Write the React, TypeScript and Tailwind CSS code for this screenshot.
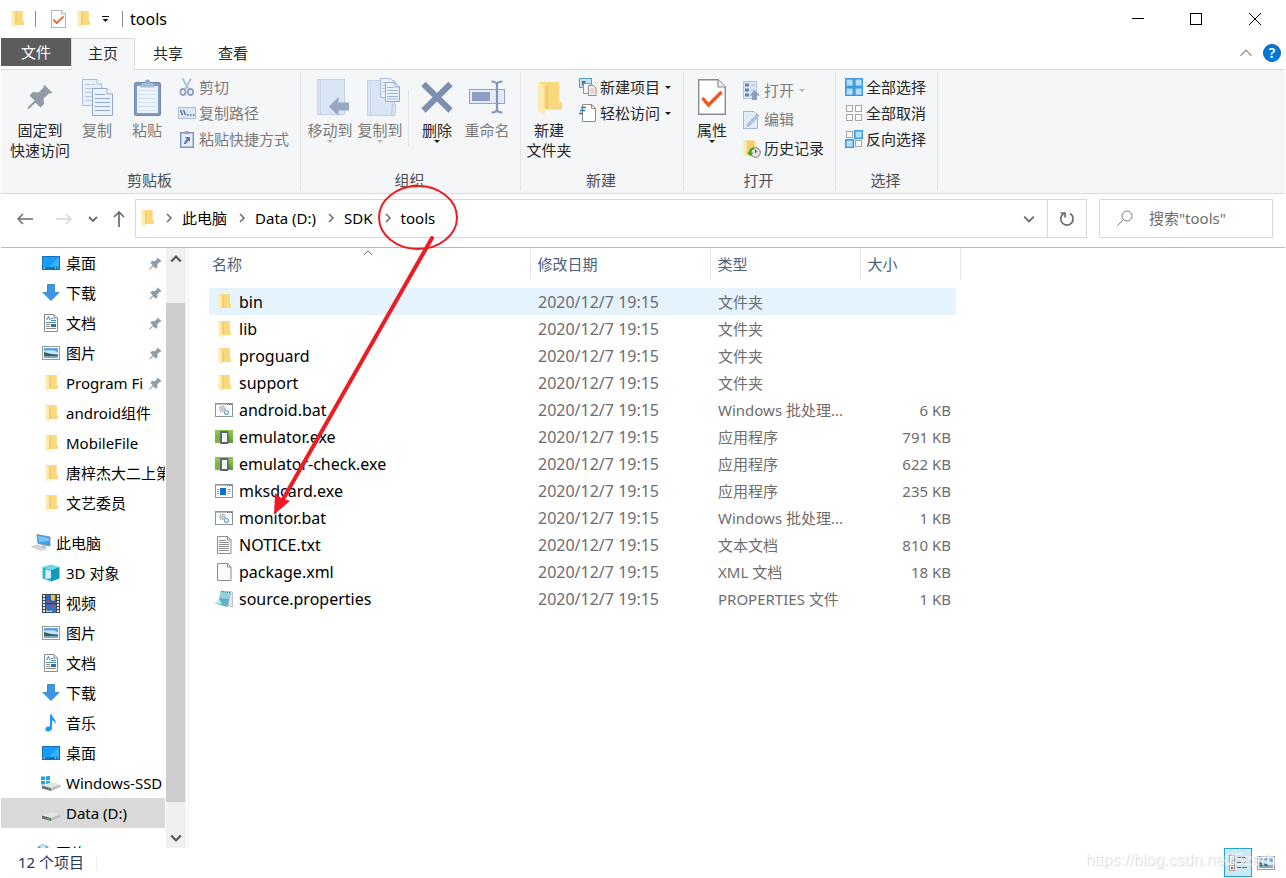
import React from 'react';

type IconProps = { className?: string };

/* ---------- Icons ---------- */

const FolderIcon: React.FC<IconProps> = ({ className = 'w-[13px] h-[18px]' }) => (
  <svg viewBox="0 0 13 18" preserveAspectRatio="none" className={className}>
    <path d="M3 1h8.5v10.5H13V15H3z" fill="#f5cd6c" />
    <path d="M6 1h5.5v10.5H13V15H6z" fill="#fad87d" />
    <path d="M0.5 1L4 3.5V18L0.5 15.5z" fill="#fdebb0" />
    <path d="M0.5 1H8L4 3.5z" fill="#fbdc85" />
  </svg>
);

const CheckPageIcon: React.FC<IconProps> = ({ className = 'w-[15px] h-[18px]' }) => (
  <svg viewBox="0 0 28 36" preserveAspectRatio="none" className={className}>
    <path d="M0.7 0.7H20l7.3 7.3V35.3H0.7z" fill="#fff" stroke="#8c8c8c" strokeWidth="1.4" />
    <path d="M20 0.7V8h7.3" fill="#eee" stroke="#8c8c8c" strokeWidth="1.2" />
    <path d="M4.5 19l6 7L23.5 13" fill="none" stroke="#f0561d" strokeWidth="3.4" />
  </svg>
);

const PinIcon: React.FC<IconProps> = ({ className = 'w-[13px] h-[13px]' }) => (
  <svg viewBox="0 0 26 26" className={className}>
    <path
      d="M17 0.5L25.5 9l-3.5 0.5-5.5 5 0.5 5.5-3.5 3.5-5-5L2 25l-1.5-0.5L1 23l6.5-6.5-5-5L6 8l5.5 0.5 5-5z"
      fill="#8f9ba5"
    />
  </svg>
);

const CopyIcon = () => (
  <svg viewBox="0 0 31 37" className="w-[31px] h-[37px]">
    <path d="M0.5 0.5H15l4.5 4.5V26.5H0.5z" fill="#e6effa" stroke="#a9bdd9" />
    <path d="M15 0.5V5h4.5" fill="#fff" stroke="#a9bdd9" />
    <path d="M3 5.5h10M3 9.5h13M3 13.5h9M3 17.5h7M3 21.5h7" stroke="#b7c9e2" />
    <path d="M10.5 9.5H25l5.5 5.5V36.5H10.5z" fill="#eaf2fc" stroke="#91a8cb" />
    <path d="M25 9.5V15h5.5" fill="#fff" stroke="#91a8cb" />
    <path d="M13 15.5h10M13 19.5h15M13 23.5h15M13 27.5h15M13 31.5h15" stroke="#91a8cb" />
  </svg>
);

const PasteIcon = () => (
  <svg viewBox="0 0 27 37" className="w-[27px] h-[37px]">
    <rect x="0.5" y="3.5" width="26" height="33" rx="1.5" fill="#8299c1" stroke="#7189b5" />
    <rect x="3" y="7" width="21" height="27" fill="#edf4fd" />
    <path d="M4 11.5h19M4 15.5h19M4 19.5h19M4 23.5h19M4 27.5h19M4 31.5h19" stroke="#d3dff0" />
    <circle cx="13.5" cy="3" r="2.5" fill="#8fa5ca" />
    <path d="M8 4h11l2 4.5H6z" fill="#a8bbd8" />
  </svg>
);

const CutIcon = () => (
  <svg viewBox="0 0 16 18" className="w-4 h-[18px]" fill="none" stroke="#8ea1be" strokeWidth="1.8">
    <path d="M3.5 0.5L10 11.5M12 0.5L6 11.5" stroke="#b3c2d8" strokeWidth="2" />
    <ellipse cx="4" cy="14" rx="2.6" ry="3" />
    <ellipse cx="11.5" cy="14" rx="2.6" ry="3" />
  </svg>
);

const CopyPathIcon = () => (
  <svg viewBox="0 0 18 12" className="w-[18px] h-3">
    <rect x="0.5" y="0.5" width="17" height="11" fill="#dbe7f6" stroke="#aebfd9" />
    <path d="M2.5 3l2 5M5.5 3l2 5" stroke="#50698f" strokeWidth="1.3" />
    <path d="M9 8h1.5M12 8h1.5M15 8h1.5" stroke="#50698f" strokeWidth="1.5" />
  </svg>
);

const PasteLinkIcon = () => (
  <svg viewBox="0 0 14 18" className="w-3.5 h-[18px]">
    <rect x="0.75" y="2.75" width="12.5" height="14.5" fill="#e6effa" stroke="#7e97c1" strokeWidth="1.5" />
    <path d="M4 4l1.5-3h3L10 4z" fill="#8fa5ca" />
    <path d="M5 7h5v5L8.5 10.5 6 14H4c0-2 1.5-4 2.5-5z" fill="#5f7cad" />
  </svg>
);

const MoveToIcon = () => (
  <svg viewBox="-5 0 37 37" className="w-[37px] h-[37px]">
    <rect x="0.5" y="0.5" width="27" height="35" fill="#d9e5f5" stroke="#c2d2e8" />
    <path d="M3.5 1v34" stroke="#c8d7ec" />
    <path d="M12 27.5L21.5 18v5.5H32v8H21.5V37z" fill="#97a8c5" />
  </svg>
);

const CopyToIcon = () => (
  <svg viewBox="-7 0 41 39" className="w-[41px] h-[39px]">
    <rect x="0.5" y="2.5" width="27" height="35" fill="#d9e5f5" stroke="#c2d2e8" />
    <path d="M3.5 3v34" stroke="#c8d7ec" />
    <path d="M25.5 26h3v9l-2 2.5h-2z" fill="#d9e5f5" stroke="#b9cae3" />
    <path d="M13.5 0.5h10l4 4v15h-14z" fill="#eaf2fc" stroke="#a9bdd9" />
    <path d="M15 4.5h7M15 7.5h7M15 10.5h7M15 13.5h7" stroke="#b7c9e2" />
    <path d="M18.5 4.5H28l4.5 4.5v14.5h-14z" fill="#eaf2fc" stroke="#91a8cb" />
    <path d="M28 4.5V9h4.5" fill="none" stroke="#91a8cb" />
    <path d="M20 9.5h7M20 12.5h11M20 15.5h11M20 18.5h11M20 21h11" stroke="#9db3d3" />
  </svg>
);

const DeleteIcon = () => (
  <svg viewBox="0 0 32 32" className="w-8 h-8">
    <path d="M2.5 3L29.5 29.5M29.5 3L2.5 29.5" stroke="#7d8fb1" strokeWidth="6" />
  </svg>
);

const RenameIcon = () => (
  <svg viewBox="0 0 36 34" className="w-9 h-[34px]">
    <rect x="0.5" y="9.5" width="35" height="14" fill="#e2ecf9" stroke="#8ea5c9" />
    <rect x="3" y="12" width="18" height="9" fill="#8c9fc1" />
    <path
      d="M22.5 1.5c3 0 5.5 1 5.5 3.5 0-2.5 2.5-3.5 5.5-3.5M28 4v26M22.5 32.5c3 0 5.5-1 5.5-3.5 0 2.5 2.5 3.5 5.5 3.5"
      fill="none"
      stroke="#8597b8"
      strokeWidth="2.2"
    />
  </svg>
);

const NewItemIcon = () => (
  <svg viewBox="0 0 18 18" className="w-[18px] h-[18px]">
    <rect x="0.5" y="0.5" width="12" height="9" fill="#bfe3f7" stroke="#5b9fc6" />
    <rect x="3" y="3" width="3.5" height="4.5" fill="#54717f" />
    <rect x="4.5" y="5.5" width="8" height="10" fill="#f5f5f5" stroke="#999" />
    <path d="M9.5 7.5h5l2.5 2.5v7.5H9.5z" fill="#fff" stroke="#888" />
    <path d="M11 11h4.5M11 13h4.5M11 15h4.5" stroke="#e3a19b" />
  </svg>
);

const EasyAccessIcon = () => (
  <svg viewBox="0 0 18 18" className="w-[18px] h-[18px]">
    <path d="M3.5 0.5h9l4 4v13H3.5z" fill="#fff" stroke="#8c8c8c" />
    <path d="M12.5 0.5v4h4" fill="none" stroke="#8c8c8c" />
    <path d="M2 3.5h5M1 6.5h5M0 9.5h4" stroke="#2f74b5" strokeWidth="1.3" />
  </svg>
);

const OpenIcon = () => (
  <svg viewBox="0 0 18 19" className="w-[18px] h-[19px]">
    <rect x="0.5" y="0.5" width="13" height="17" fill="#dbe7f6" stroke="#b3c4de" />
    <path d="M2 2.5h4v3H2zM2 7.5h4v3H2zM2 12.5h4v3H2z" fill="#6d82a8" />
    <path d="M8 4h4M8 9h3M8 14h2" stroke="#a9b9d3" />
    <path d="M11.5 9L17 14.5h-3V19H9v-4.5H6.5z" fill="#8c9fc1" />
  </svg>
);

const EditIcon = () => (
  <svg viewBox="0 0 18 18" className="w-[18px] h-[18px]">
    <path d="M0.5 0.5H11l3.5 3.5v13.5H0.5z" fill="#e2ecf9" stroke="#a5b9d8" />
    <path d="M5 13L14 3l2 2-9.5 9.5L4 15.5z" fill="#b9cbe4" stroke="#8ba2c8" strokeWidth="0.8" />
  </svg>
);

const HistoryIcon = () => (
  <svg viewBox="0 0 18 18" className="w-[18px] h-[18px]">
    <path d="M2 0.5h10V15H2z" fill="#f7ce6b" />
    <path d="M0.5 0.5L4 2v15.5L0.5 15z" fill="#fdeaa9" />
    <circle cx="12.5" cy="12.5" r="4.8" fill="#e6e6e6" stroke="#777" />
    <path d="M12.5 9.5v3l2-1.5" fill="none" stroke="#555" />
    <path d="M11 7.5c-4 0-5 2.5-5 5H4l3.5 4 3-4H8.5c0-2 1-3 2.5-3z" fill="#36a837" />
  </svg>
);

const SelectGridIcon: React.FC<{ cells: boolean[] }> = ({ cells }) => (
  <svg viewBox="0 0 18 18" className="w-[18px] h-[18px]">
    {cells.map((on, i) => {
      const x = (i % 2) * 9;
      const y = Math.floor(i / 2) * 9;
      return (
        <rect
          key={i}
          x={x + (on ? 0.8 : 1.5)}
          y={y + (on ? 0.8 : 1.5)}
          width={on ? 7.6 : 6}
          height={on ? 7.6 : 6}
          fill={on ? '#b5defa' : '#fff'}
          stroke={on ? '#3897e0' : '#a5a5a5'}
          strokeWidth={on ? 1.5 : 1}
        />
      );
    })}
  </svg>
);

const DesktopIcon = () => (
  <svg viewBox="0 0 18 14" className="w-[18px] h-3.5">
    <rect x="0.5" y="0.5" width="17" height="13" fill="#189cf7" stroke="#0f6fb8" />
    <path d="M17 1v9L7 11z" fill="#3fb0fb" />
    <path d="M1 12h16" stroke="#0b4d83" />
    <path d="M1.5 12h1.5M13 12h1M15.5 12h1" stroke="#fff" />
  </svg>
);

const DownloadIcon = () => (
  <svg viewBox="0 0 18 18" className="w-[18px] h-[18px]">
    <path d="M5.5 0.5h7v8h4.5L9 16.5 1 8.5h4.5z" fill="#3c96e4" stroke="#2a78c0" strokeWidth="0.8" />
  </svg>
);

const DocumentIcon = () => (
  <svg viewBox="0 0 18 18" className="w-[18px] h-[18px]">
    <path d="M2.5 0.5h9.5l3.5 3.5v13.5h-13z" fill="#fff" stroke="#848b91" />
    <path d="M12 0.5V4h3.5" fill="#ddd" stroke="#848b91" />
    <path d="M4.5 6L6.5 2.5 8 6" fill="none" stroke="#2c7cc0" />
    <path d="M9 4.5h2M9 6.5h5M4 8.5h10" stroke="#4695cf" />
    <path d="M4 10.5h4M4 12.5h4M4 14.5h10" stroke="#8b8b8b" />
    <rect x="9" y="10" width="5" height="3" fill="#3f6d93" />
  </svg>
);

const PictureIcon = () => (
  <svg viewBox="0 0 18 14" className="w-[18px] h-3.5">
    <rect x="0.5" y="0.5" width="17" height="13" fill="#fff" stroke="#9a9a9a" />
    <rect x="2" y="2" width="14" height="10" fill="#5ea3e8" />
    <path d="M4 4.5h8l4 2v1.5H2V5z" fill="#cfe6fa" />
    <path d="M2 6l5 1.5 9 1.5V10H2z" fill="#39605a" />
    <path d="M2 10h14v2H2z" fill="#7da9c8" />
  </svg>
);

const ComputerIcon = () => (
  <svg viewBox="0 0 20 18" className="w-5 h-[18px]">
    <path d="M6 0.5L19 3v9L7 9.5z" fill="#3aa1ee" stroke="#7c8790" strokeWidth="0.8" />
    <path d="M7 2l11 2v3L8 8z" fill="#7cc4f7" />
    <path d="M11 11l4 1v2h-5z" fill="#b7bcc0" />
    <path d="M0.5 12.5L6 11l9 3.5-5 2z" fill="#d4d7da" stroke="#b5b9bc" strokeWidth="0.6" />
  </svg>
);

const CubeIcon = () => (
  <svg viewBox="0 0 18 18" className="w-[18px] h-[18px]">
    <path d="M0.5 3L9 0.5 17.5 3 9 6z" fill="#6fd3e6" />
    <path d="M0.5 3L9 6v11.5l-8.5-3z" fill="#35b3cf" />
    <path d="M17.5 3L9 6v11.5l8.5-3z" fill="#129bb9" />
    <path d="M3.5 5.5L9 7v7l-5.5 1z" fill="#d5f2f8" />
  </svg>
);

const VideoIcon = () => (
  <svg viewBox="0 0 18 19" className="w-[18px] h-[19px]">
    <rect width="18" height="19" fill="#454545" />
    <path d="M2 1v17M16 1v17" stroke="#e8e8e8" strokeWidth="2" strokeDasharray="2 1" />
    <rect x="4" y="1" width="10" height="8" fill="#2a66c4" />
    <rect x="4" y="10.5" width="10" height="8" fill="#2f72d1" />
    <path d="M9 1h4v3l-1 3-3-1z" fill="#e8c630" />
    <circle cx="6.5" cy="7" r="1.5" fill="#d8443a" />
    <path d="M9.5 10.5h3l-1 3h-1z" fill="#d8443a" />
    <path d="M4 16l3 1 3-1v2H4z" fill="#e8c630" />
  </svg>
);

const MusicIcon = () => (
  <svg viewBox="0 0 18 18" className="w-[18px] h-[18px]">
    <path d="M8 0.5h2c0 3.5 4.5 4.5 4 10-0.5-2-1.5-3.5-4-4v7.5c0 2-1.5 3.5-4 3.5-3.5 0-3.5-5 0.5-5H8z" fill="#149bf3" />
  </svg>
);

const DiskIcon: React.FC<{ windows?: boolean }> = ({ windows }) => (
  <svg viewBox="0 0 20 16" className="w-5 h-4">
    {windows && <path d="M0 1.5h4V5H0zM5 1.3L9 1v4H5zM0 6h4v3.5H0zM5 6h4v4l-4-0.5z" fill="#19a7e8" />}
    <path d="M1 10.5L11 7l8.5 2.500L10 13z" fill="#e6e6e6" />
    <path d="M1 10.5l9 2.5v3l-9-2.500z" fill="#6b6f6d" />
    <path d="M19.5 9.5V12L10 16v-3z" fill="#bdbdbd" />
    <circle cx="7.5" cy="13.8" r="0.8" fill="#37d05a" />
  </svg>
);

const NetworkIcon = () => (
  <svg viewBox="0 0 20 18" className="w-5 h-[18px]">
    <circle cx="12" cy="7" r="6.5" fill="#5aa0c4" />
    <path d="M9 1.5l5-0.5 1 3-5 2z" fill="#cfe7ee" />
  </svg>
);

const BatIcon = () => (
  <svg viewBox="0 0 18 14" className="w-[18px] h-3.5">
    <rect x="0.5" y="0.5" width="17" height="13" fill="#fff" stroke="#8b9299" />
    <path d="M1 1.5h16" stroke="#b8bdc2" />
    <path d="M12 1.5h1M14 1.5h1M16 1.5h1" stroke="#5d656c" />
    <circle cx="7.5" cy="6" r="2.6" fill="none" stroke="#8b959e" strokeWidth="1.5" strokeDasharray="1.2 0.6" />
    <circle cx="7.5" cy="6" r="1.2" fill="#a8b0b7" />
    <circle cx="11.5" cy="9.5" r="2" fill="#e4f2fb" stroke="#7fa6c3" strokeWidth="1.2" />
  </svg>
);

const EmulatorIcon = () => (
  <svg viewBox="0 0 18 16" className="w-[18px] h-4">
    <rect y="1" width="18" height="13" fill="#7cb342" />
    <path d="M0 1h18v5H0z" fill="#8bc34a" />
    <path d="M12 6l6 6v2h-6z" fill="#629a35" />
    <rect x="5" y="2" width="8.5" height="13" rx="1" fill="#5d666b" />
    <rect x="7" y="4" width="5" height="9" fill="#f1f3f4" />
  </svg>
);

const ExeIcon = () => (
  <svg viewBox="0 0 18 14" className="w-[18px] h-3.5">
    <rect x="0.5" y="0.5" width="17" height="13" fill="#fff" stroke="#8b9299" />
    <path d="M1 1.5h16" stroke="#b8bdc2" />
    <path d="M12 1.5h1M14 1.5h1M16 1.5h1" stroke="#5d656c" />
    <rect x="5" y="4" width="6" height="7" fill="#0a6fd8" />
    <path d="M2 5.5h2M2 7.5h2M2 9.5h2M12.5 5.5h3.5M12.5 7.5h3.5M12.5 9.5h2" stroke="#8ba6bd" />
  </svg>
);

const PageIcon: React.FC<{ lines?: boolean }> = ({ lines }) => (
  <svg viewBox="0 0 18 18" className="w-[18px] h-[18px]">
    <path d="M2.5 0.5h10l3.5 3.5v13.5H2.5z" fill="#fbfbfb" stroke="#8c8c8c" />
    <path d="M12.5 0.5V4H16" fill="none" stroke="#8c8c8c" />
    {lines && <path d="M4 4.5h7M4 6.5h10M4 8.5h10M4 10.5h10M4 12.5h10M4 14.5h10" stroke="#8f8f8f" />}
  </svg>
);

const PropertiesIcon = () => (
  <svg viewBox="0 0 20 18" className="w-5 h-[18px] shrink-0">
    <path d="M15 1.5l3.5 0.5V17L14 15.5z" fill="#e9e6dc" stroke="#a0a0a0" strokeWidth="0.6" />
    <path d="M7 1l10 1-3.5 15L1 13.5 5 9z" fill="#5fb2c6" />
    <path d="M7 1l10 1-1.5 7L5 8z" fill="#93d2df" />
    <path d="M1 13.5L5 9l3 5z" fill="#c9ecf2" />
    <path d="M7 1.5l10 1" stroke="#5a6a70" strokeDasharray="1 1" />
  </svg>
);

const Chevron: React.FC<IconProps & { d: string; color?: string; width?: number }> = ({
  className = 'w-2.5 h-2.5',
  d,
  color = '#6b6b6b',
  width = 1.5,
}) => (
  <svg viewBox="0 0 10 10" className={className}>
    <path d={d} fill="none" stroke={color} strokeWidth={width} />
  </svg>
);

const CHEVRON_UP = 'M1 7l4-4 4 4';
const CHEVRON_DOWN = 'M1 3l4 4 4-4';
const CHEVRON_RIGHT = 'M3 1l4 4-4 4';

const Caret: React.FC<{ disabled?: boolean }> = ({ disabled }) => (
  <svg viewBox="0 0 6 3" className="w-1.5 h-[3px] shrink-0">
    <path d="M0 0h6L3 3z" fill={disabled ? '#b3b3b3' : '#1a1a1a'} />
  </svg>
);

/* ---------- Ribbon ---------- */

type BigButtonProps = {
  icon: React.ReactNode;
  lines: string[];
  disabled?: boolean;
  caret?: boolean;
  wide?: boolean;
};

const BigButton: React.FC<BigButtonProps> = ({ icon, lines, disabled, caret, wide }) => (
  <button
    type="button"
    disabled={disabled}
    className={`flex flex-col items-center shrink-0 leading-5 whitespace-nowrap ${wide ? 'w-16' : 'w-[50px]'} ${
      disabled ? 'text-[#7b7b7b]' : 'text-[#262626]'
    }`}
  >
    <span className="flex h-[46px] items-center justify-center">{icon}</span>
    {lines.map((line) => (
      <span key={line}>{line}</span>
    ))}
    {caret && <Caret disabled={disabled} />}
  </button>
);

type SmallButtonProps = {
  icon: React.ReactNode;
  label: string;
  disabled?: boolean;
  caret?: boolean;
  tall?: boolean;
};

const SmallButton: React.FC<SmallButtonProps> = ({ icon, label, disabled, caret, tall }) => (
  <button
    type="button"
    disabled={disabled}
    className={`flex items-center whitespace-nowrap ${tall ? 'h-[29px]' : 'h-[26px]'} ${
      disabled ? 'text-[#7b7b7b]' : 'text-[#262626]'
    }`}
  >
    <span className="mr-[3px] flex w-[18px] justify-center">{icon}</span>
    <span className="pb-px">{label}</span>
    {caret && (
      <span className="ml-[5px]">
        <Caret disabled={disabled} />
      </span>
    )}
  </button>
);

const RibbonGroup: React.FC<{ label: string; className: string; bodyClass: string; children: React.ReactNode }> = ({
  label,
  className,
  bodyClass,
  children,
}) => (
  <section
    aria-label={label}
    className={`flex flex-col shrink-0 border-r border-[#e2e3e4] my-0.5 pt-0.5 pb-px ${className}`}
  >
    <div className={`flex flex-1 ${bodyClass}`}>{children}</div>
    <div className="pr-0.5 text-center leading-5 text-[#4d4d4d]">{label}</div>
  </section>
);

const Ribbon = () => (
  <div className="flex h-[124px] shrink-0 overflow-hidden bg-[#f5f6f7] border-b border-[#dadbdc]">
    <RibbonGroup label="剪贴板" className="w-[300px]" bodyClass="pl-[7px]">
      <BigButton wide icon={<PinIcon className="w-[26px] h-[26px]" />} lines={['固定到', '快速访问']} />
      <BigButton disabled icon={<CopyIcon />} lines={['复制']} />
      <BigButton disabled icon={<PasteIcon />} lines={['粘贴']} />
      <div className="ml-1.5 flex flex-col">
        <SmallButton disabled icon={<CutIcon />} label="剪切" />
        <SmallButton disabled icon={<CopyPathIcon />} label="复制路径" />
        <SmallButton disabled icon={<PasteLinkIcon />} label="粘贴快捷方式" />
      </div>
    </RibbonGroup>
    <RibbonGroup label="组织" className="w-[220px]" bodyClass="pl-1">
      <BigButton disabled caret icon={<MoveToIcon />} lines={['移动到']} />
      <BigButton disabled caret icon={<CopyToIcon />} lines={['复制到']} />
      <div className="mx-[3px] mt-4 h-14 w-px bg-[#e2e3e4]" />
      <BigButton caret icon={<DeleteIcon />} lines={['删除']} />
      <BigButton disabled icon={<RenameIcon />} lines={['重命名']} />
    </RibbonGroup>
    <RibbonGroup label="新建" className="w-[163px]" bodyClass="pl-[3px]">
      <BigButton icon={<FolderIcon className="w-[25px] h-[35px]" />} lines={['新建', '文件夹']} />
      <div className="ml-[5px] flex flex-col">
        <SmallButton caret icon={<NewItemIcon />} label="新建项目" />
        <SmallButton caret icon={<EasyAccessIcon />} label="轻松访问" />
      </div>
    </RibbonGroup>
    <RibbonGroup label="打开" className="w-[152px]" bodyClass="pl-[3px]">
      <BigButton caret icon={<CheckPageIcon className="w-7 h-9" />} lines={['属性']} />
      <div className="ml-1.5 flex flex-col pt-0.5">
        <SmallButton tall disabled caret icon={<OpenIcon />} label="打开" />
        <SmallButton tall disabled icon={<EditIcon />} label="编辑" />
        <SmallButton tall icon={<HistoryIcon />} label="历史记录" />
      </div>
    </RibbonGroup>
    <RibbonGroup label="选择" className="w-[102px]" bodyClass="pl-[9px]">
      <div className="flex flex-col">
        <SmallButton icon={<SelectGridIcon cells={[true, true, true, true]} />} label="全部选择" />
        <SmallButton icon={<SelectGridIcon cells={[false, false, false, false]} />} label="全部取消" />
        <SmallButton icon={<SelectGridIcon cells={[false, true, true, false]} />} label="反向选择" />
      </div>
    </RibbonGroup>
  </div>
);

/* ---------- Title bar and tabs ---------- */

const TitleBar = () => (
  <header className="flex h-[38px] shrink-0 items-center">
    <div className="flex items-center pl-2.5">
      <FolderIcon />
      <div className="ml-[11px] h-4 w-px bg-[#8a8a8a]" />
      <button type="button" aria-label="属性" className="ml-[15px]">
        <CheckPageIcon />
      </button>
      <button type="button" aria-label="新建文件夹" className="ml-[11px]">
        <FolderIcon />
      </button>
      <button type="button" aria-label="自定义快速访问工具栏" className="ml-3">
        <svg viewBox="0 0 7 6" className="w-[7px] h-1.5">
          <path d="M0 0.5h7" stroke="#111" />
          <path d="M0.5 3h6L3.5 6z" fill="#111" />
        </svg>
      </button>
      <div className="ml-[13px] h-4 w-px bg-[#8a8a8a]" />
      <h1 className="ml-[7px] text-base leading-5 text-black">tools</h1>
    </div>
    <div className="ml-auto flex h-full">
      <button type="button" aria-label="最小化" className="flex w-[58px] items-center justify-center">
        <svg viewBox="0 0 12 12" className="w-3 h-3">
          <path d="M0 5.5h12" stroke="#000" />
        </svg>
      </button>
      <button type="button" aria-label="最大化" className="flex w-[58px] items-center justify-center">
        <svg viewBox="0 0 12 12" className="w-3 h-3">
          <rect x="0.5" y="0.5" width="11" height="11" fill="none" stroke="#000" />
        </svg>
      </button>
      <button type="button" aria-label="关闭" className="flex w-[60px] items-center justify-center">
        <svg viewBox="0 0 12 12" className="w-3 h-3">
          <path d="M0 0l12 12M12 0L0 12" stroke="#000" />
        </svg>
      </button>
    </div>
  </header>
);

const Tabs = () => (
  <nav className="flex h-8 shrink-0 border-b border-[#dadbdc] text-[#262626]">
    <button type="button" className="h-7 w-[70px] bg-[#5c5c5c] text-white">
      文件
    </button>
    <button type="button" className="h-8 w-16 border border-b-0 border-[#dadbdc] bg-[#f5f6f7] pb-[3px]">
      主页
    </button>
    <button type="button" className="h-[31px] w-[66px] pb-0.5">
      共享
    </button>
    <button type="button" className="h-[31px] w-16 pb-0.5">
      查看
    </button>
    <div className="ml-auto flex items-center gap-2.5 pr-1 pb-0.5">
      <button type="button" aria-label="最小化功能区">
        <Chevron className="w-3.5 h-3.5" d={CHEVRON_UP} color="#9a9a9a" width={1} />
      </button>
      <button
        type="button"
        aria-label="帮助"
        className="flex size-[18px] items-center justify-center rounded-full border border-[#0a5fb0] bg-[#0078d7] text-sm font-semibold text-white"
      >
        ?
      </button>
    </div>
  </nav>
);

/* ---------- Address bar ---------- */

const crumbs = ['此电脑', 'Data (D:)', 'SDK', 'tools'];

const AddressBar = () => (
  <div className="flex h-[54px] shrink-0 items-center border-b border-[#b9b9b9] pr-3 pb-1">
    <div className="flex w-[134px] shrink-0 items-center pl-4">
      <button type="button" aria-label="后退">
        <svg viewBox="0 0 16 12" className="w-4 h-3" fill="none" stroke="#6b6b6b" strokeWidth="1.5">
          <path d="M16 6H1M6 1L1 6l5 5" />
        </svg>
      </button>
      <button type="button" aria-label="前进" disabled className="ml-[23px]">
        <svg viewBox="0 0 16 12" className="w-4 h-3" fill="none" stroke="#d6d6d6" strokeWidth="1.5">
          <path d="M0 6h15M10 1l5 5-5 5" />
        </svg>
      </button>
      <button type="button" aria-label="最近浏览的位置" className="ml-4">
        <Chevron d={CHEVRON_DOWN} width={1.8} />
      </button>
      <button type="button" aria-label="上移" className="ml-[15px]">
        <svg viewBox="0 0 12 16" className="w-3 h-4" fill="none" stroke="#6b6b6b" strokeWidth="1.7">
          <path d="M6 16V1M1 6l5-5 5 5" />
        </svg>
      </button>
    </div>
    <div className="flex h-[39px] flex-1 items-center border border-[#d9d9d9]">
      <div className="flex flex-1 items-center pl-[5px] pb-0.5">
        <FolderIcon />
        <ol className="flex items-center text-black">
          {crumbs.map((crumb) => (
            <li key={crumb} className="flex items-center">
              <Chevron className="ml-2.5 mr-2 w-2.5 h-2.5" d={CHEVRON_RIGHT} />
              <a href="#">{crumb}</a>
            </li>
          ))}
        </ol>
      </div>
      <button type="button" aria-label="以前的位置" className="flex h-full w-9 items-center justify-center">
        <Chevron className="w-3 h-3" d={CHEVRON_DOWN} />
      </button>
      <button
        type="button"
        aria-label="刷新"
        className="flex h-full w-[39px] items-center justify-center border-l border-[#d9d9d9]"
      >
        <svg viewBox="0 0 16 16" className="w-4 h-4" fill="none" stroke="#6b6b6b" strokeWidth="1.7">
          <path d="M11 2.5a6.2 6.2 0 1 1-6.5 0.2" />
          <path d="M1.5 2h4.5v4.5" />
        </svg>
      </button>
    </div>
    <label className="ml-3 flex h-[39px] w-[174px] items-center border border-[#d9d9d9] pl-[17px] pb-0.5">
      <svg viewBox="0 0 16 16" className="w-4 h-4 shrink-0" fill="none" stroke="#7a7a7a">
        <circle cx="10" cy="6" r="5" />
        <path d="M6.5 9.5L0.5 15.5" />
      </svg>
      <input
        type="text"
        aria-label="搜索"
        placeholder={'搜索"tools"'}
        className="ml-4 w-full min-w-0 outline-none placeholder:text-[#6d6d6d]"
      />
    </label>
  </div>
);

/* ---------- Navigation pane ---------- */

type NavEntry = {
  icon: React.ReactNode;
  label: string;
  pinned?: boolean;
  root?: boolean;
  selected?: boolean;
};

const quickAccess: NavEntry[] = [
  { icon: <DesktopIcon />, label: '桌面', pinned: true },
  { icon: <DownloadIcon />, label: '下载', pinned: true },
  { icon: <DocumentIcon />, label: '文档', pinned: true },
  { icon: <PictureIcon />, label: '图片', pinned: true },
  { icon: <FolderIcon />, label: 'Program Fi', pinned: true },
  { icon: <FolderIcon />, label: 'android组件' },
  { icon: <FolderIcon />, label: 'MobileFile' },
  { icon: <FolderIcon />, label: '唐梓杰大二上第' },
  { icon: <FolderIcon />, label: '文艺委员' },
];

const thisPc: NavEntry[] = [
  { icon: <ComputerIcon />, label: '此电脑', root: true },
  { icon: <CubeIcon />, label: '3D 对象' },
  { icon: <VideoIcon />, label: '视频' },
  { icon: <PictureIcon />, label: '图片' },
  { icon: <DocumentIcon />, label: '文档' },
  { icon: <DownloadIcon />, label: '下载' },
  { icon: <MusicIcon />, label: '音乐' },
  { icon: <DesktopIcon />, label: '桌面' },
  { icon: <DiskIcon windows />, label: 'Windows-SSD' },
  { icon: <DiskIcon />, label: 'Data (D:)', selected: true },
];

const network: NavEntry[] = [{ icon: <NetworkIcon />, label: '网络', root: true }];

const NavList: React.FC<{ entries: NavEntry[] }> = ({ entries }) => (
  <ul>
    {entries.map((entry) => (
      <li key={entry.label}>
        <a
          href="#"
          className={`flex h-[30px] items-center overflow-hidden whitespace-nowrap ${
            entry.root ? 'pl-[30px]' : 'pl-10'
          } ${entry.selected ? 'bg-[#d9d9d9]' : ''}`}
        >
          <span className="mr-[5px] flex w-5 shrink-0 justify-center">{entry.icon}</span>
          <span className="min-w-0 flex-1 overflow-hidden">{entry.label}</span>
          {entry.pinned && (
            <span className="mr-[3px] shrink-0">
              <PinIcon />
            </span>
          )}
        </a>
      </li>
    ))}
  </ul>
);

const Sidebar = () => (
  <aside className="flex w-[188px] shrink-0 overflow-hidden border-r border-[#f0f0f0] text-black">
    <div className="flex min-w-0 flex-1 flex-col gap-2.5 overflow-hidden">
      <NavList entries={quickAccess} />
      <NavList entries={thisPc} />
      <NavList entries={network} />
    </div>
    <div className="ml-px mr-0.5 flex w-5 flex-col bg-[#f0f0f0]">
      <button type="button" aria-label="向上滚动" className="flex h-[21px] shrink-0 items-center justify-center">
        <Chevron className="w-3 h-3" d={CHEVRON_UP} color="#555" width={1.8} />
      </button>
      <div className="flex-[34]" />
      <div className="mr-px flex-[499] bg-[#cdcdcd]" />
      <div className="flex-[25]" />
      <button type="button" aria-label="向下滚动" className="flex h-[21px] shrink-0 items-center justify-center">
        <Chevron className="w-3 h-3" d={CHEVRON_DOWN} color="#555" width={1.8} />
      </button>
    </div>
  </aside>
);

/* ---------- File list ---------- */

type FileRow = { icon: React.ReactNode; name: string; type: string; size?: string };

const MODIFIED = '2020/12/7 19:15';

const files: FileRow[] = [
  { icon: <FolderIcon />, name: 'bin', type: '文件夹' },
  { icon: <FolderIcon />, name: 'lib', type: '文件夹' },
  { icon: <FolderIcon />, name: 'proguard', type: '文件夹' },
  { icon: <FolderIcon />, name: 'support', type: '文件夹' },
  { icon: <BatIcon />, name: 'android.bat', type: 'Windows 批处理...', size: '6 KB' },
  { icon: <EmulatorIcon />, name: 'emulator.exe', type: '应用程序', size: '791 KB' },
  { icon: <EmulatorIcon />, name: 'emulator-check.exe', type: '应用程序', size: '622 KB' },
  { icon: <ExeIcon />, name: 'mksdcard.exe', type: '应用程序', size: '235 KB' },
  { icon: <BatIcon />, name: 'monitor.bat', type: 'Windows 批处理...', size: '1 KB' },
  { icon: <PageIcon lines />, name: 'NOTICE.txt', type: '文本文档', size: '810 KB' },
  { icon: <PageIcon />, name: 'package.xml', type: 'XML 文档', size: '18 KB' },
  { icon: <PropertiesIcon />, name: 'source.properties', type: 'PROPERTIES 文件', size: '1 KB' },
];

const FileTable = () => (
  <main className="min-w-0 flex-1 overflow-hidden pl-5">
    <table className="w-[751px] table-fixed border-collapse text-left whitespace-nowrap">
      <colgroup>
        <col className="w-[321px]" />
        <col className="w-[180px]" />
        <col className="w-[150px]" />
        <col className="w-24" />
        <col className="w-1" />
      </colgroup>
      <thead className="text-[#4c607a]">
        <tr className="h-8">
          <th scope="col" className="relative border-r border-[#e5e5e5] p-0 pl-[3px] font-normal">
            名称
            <span className="absolute left-1/2 top-0 -ml-1.5">
              <Chevron d={CHEVRON_UP} color="#777" width={1} />
            </span>
          </th>
          <th scope="col" className="border-r border-[#e5e5e5] p-0 pl-[7px] font-normal">
            修改日期
          </th>
          <th scope="col" className="border-r border-[#e5e5e5] p-0 pl-[7px] font-normal">
            类型
          </th>
          <th scope="col" colSpan={2} className="border-r border-[#e5e5e5] p-0 pl-[7px] font-normal">
            大小
          </th>
        </tr>
      </thead>
      <tbody className="text-[#6d6d6d]">
        <tr className="h-2">
          <td colSpan={5} className="p-0" />
        </tr>
        {files.map((file, index) => {
          const cell = index === 0 ? 'bg-[#e5f3ff] p-0' : 'p-0';
          return (
            <tr key={file.name} className="h-[27px]">
              <td className={cell}>
                <span className="flex items-center pl-1.5 text-base leading-5 text-black">
                  <span className="mr-1.5 flex w-[18px] justify-center">{file.icon}</span>
                  {file.name}
                </span>
              </td>
              <td className={`${cell} pl-2 text-base leading-5`}>{MODIFIED}</td>
              <td className={`${cell} pl-2`}>{file.type}</td>
              <td className={`${cell} pr-[5px] text-right`}>{file.size}</td>
              <td className="p-0" />
            </tr>
          );
        })}
      </tbody>
    </table>
  </main>
);

/* ---------- Status bar ---------- */

const StatusBar = () => (
  <footer className="relative flex h-[30px] shrink-0 items-start pr-[5px]">
    <span className="pl-[17px] leading-7 text-[#1e395b]">12 个项目</span>
    <div className="mt-2 ml-3 h-3.5 w-px bg-[#ededed]" />
    <div className="ml-auto flex items-start">
      <button
        type="button"
        aria-label="详细信息"
        className="flex h-[29px] w-7 items-center justify-center border border-[#26a0da] bg-[#cbe8f6]"
      >
        <svg viewBox="0 0 18 16" className="w-[18px] h-4">
          <path d="M0.5 0.5h5v5h-5zM0.5 5.5h5v5h-5zM0.5 10.5h5v5h-5z" fill="#fff" stroke="#9a9a9a" />
          <path d="M2 2.5h2v1H2zM2 7.5h2v1H2z" fill="#6b7f95" />
          <rect x="2" y="12" width="2" height="2" fill="#c0392b" />
          <path d="M8 2.5h4M13 2.5h5M8 7.5h4M13 7.5h5M8 12.5h4M13 12.5h5" stroke="#666" />
        </svg>
      </button>
      <button type="button" aria-label="大缩略图" className="flex h-[29px] w-7 items-center justify-center">
        <PictureIcon />
      </button>
    </div>
    <span className="pointer-events-none absolute right-2.5 top-0 leading-6 text-base font-['Liberation_Sans'] text-white/70 [text-shadow:1px_1px_1px_#d8d8d8]">
      https://blog.csdn.net/Szerb
    </span>
  </footer>
);

/* Red marker linking the current folder to monitor.bat */
const Marker = () => (
  <svg viewBox="0 0 190 340" className="pointer-events-none absolute left-[270px] top-[180px] w-[190px] h-[340px]">
    <ellipse cx="148" cy="37.5" rx="39" ry="31.5" fill="none" stroke="#ed1c24" strokeWidth="2" />
    <path d="M162 58L12 321" stroke="#ed1c24" strokeWidth="4" strokeLinecap="round" />
    <path d="M4 334.5L5 313l6 5 9 3z" fill="#ed1c24" />
  </svg>
);

export default function App() {
  return (
    <div className="relative flex h-screen flex-col overflow-hidden bg-white px-px font-['Noto_Sans','Noto_Sans_CJK_SC',sans-serif] text-[15px] leading-5">
      <TitleBar />
      <Tabs />
      <Ribbon />
      <AddressBar />
      <div className="flex min-h-0 flex-1">
        <Sidebar />
        <FileTable />
      </div>
      <StatusBar />
      <Marker />
    </div>
  );
}
